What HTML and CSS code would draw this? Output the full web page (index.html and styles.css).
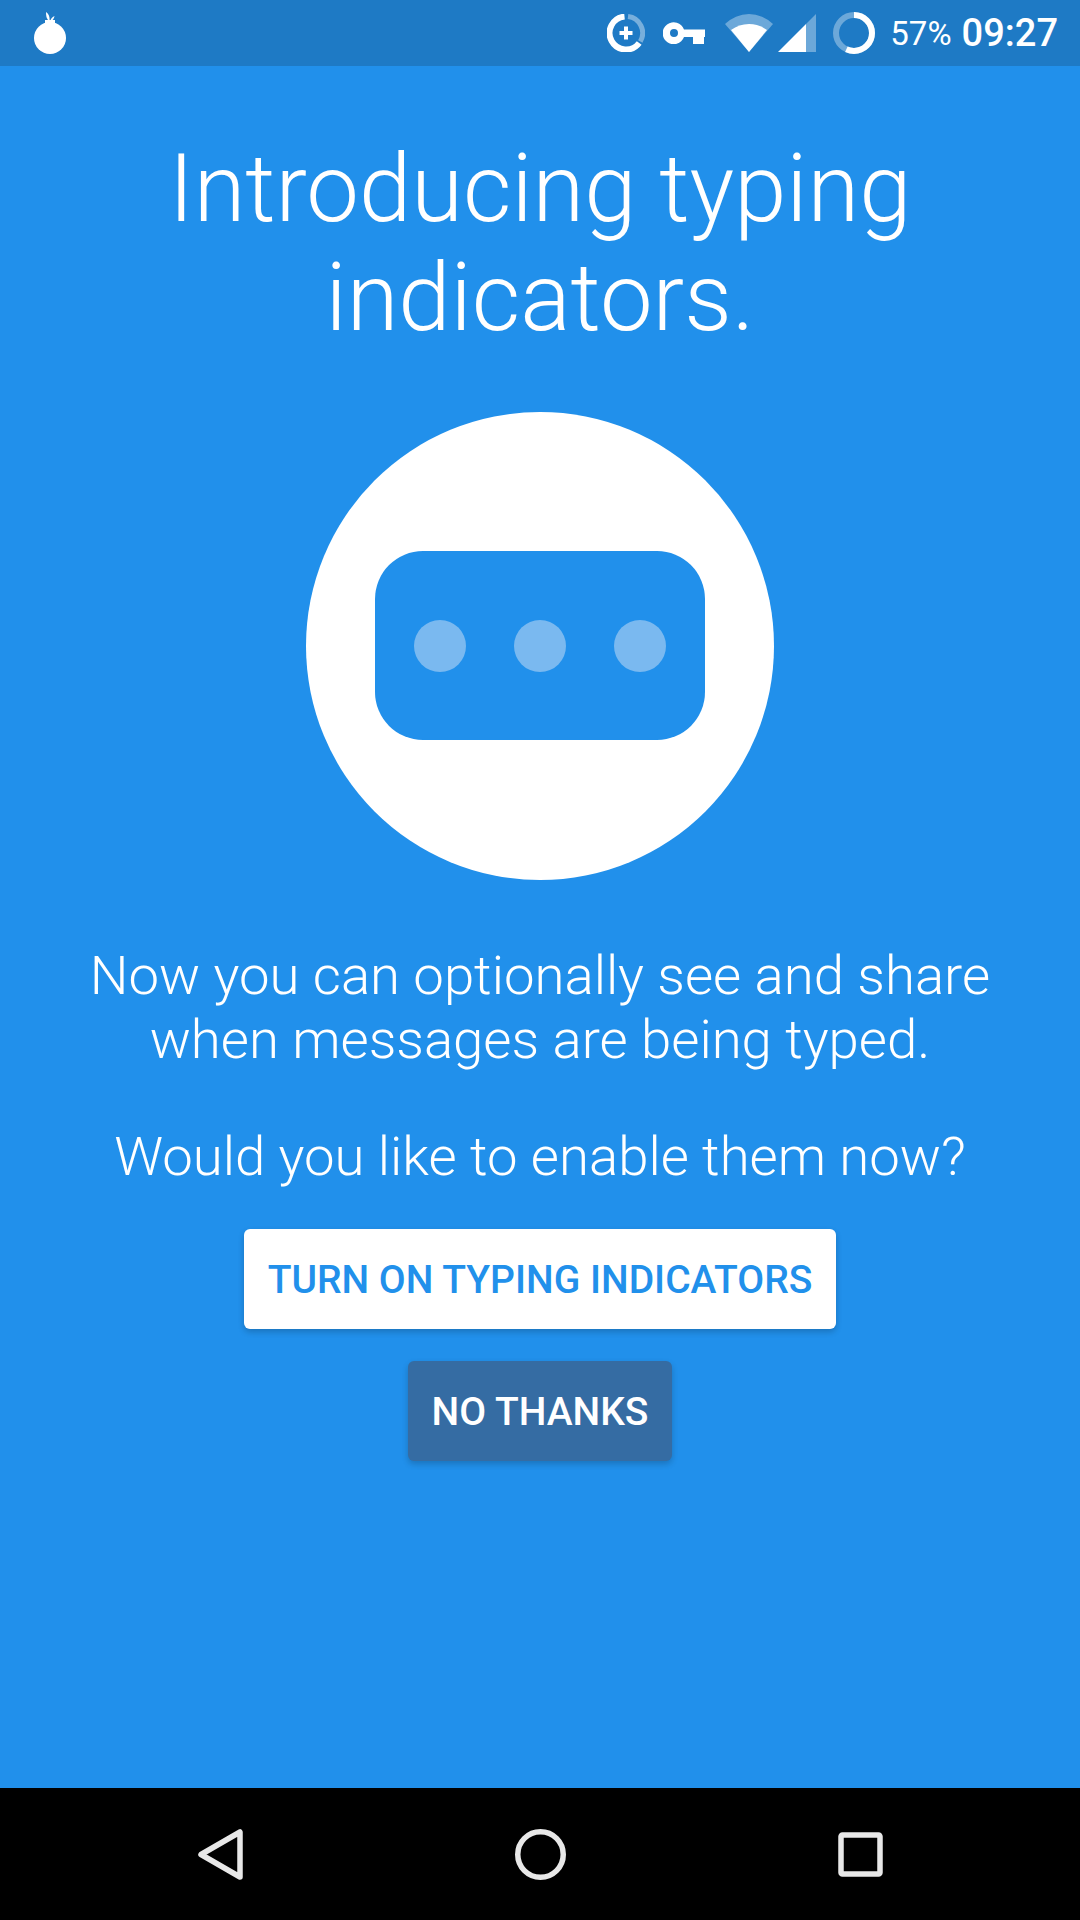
FILE: index.html
```html
<!DOCTYPE html>
<html lang="en">
<head>
    <meta charset="UTF-8">
    <meta name="viewport" content="width=device-width, initial-scale=1.0">
    <title>Typing indicators</title>
    <link rel="stylesheet" href="styles.css">
</head>
<body>
    <div class="screen">
        <div class="status-bar">
            <svg width="34" height="44" viewBox="0 0 34 44">
                <circle cx="17" cy="27" r="16" fill="#fff"/>
                <rect x="12" y="9" width="10" height="6" fill="#fff"/>
                <path d="M16 10 C13.5 8 13 5 13 1 C15.5 2.5 17 6 16.5 10Z" fill="#fff"/>
                <path d="M17.5 10 C17.5 8 19 6 21.5 5 C21 7.5 20 9.5 17.5 10.5Z" fill="#fff"/>
            </svg>
            <div class="status-icons">
                <svg class="saver-icon" width="38" height="38" viewBox="0 0 38 38">
                    <path d="M21 2.6 A16.5 16.5 0 0 1 33.3 27.4" fill="none" stroke="#fff" stroke-opacity="0.4" stroke-width="5"/>
                    <path d="M32.2 29 A16.5 16.5 0 1 1 17.5 2.6" fill="none" stroke="#fff" stroke-width="6"/>
                    <path d="M19 12.5 V25.5 M12.5 19 H25.5" stroke="#fff" stroke-width="4"/>
                </svg>
                <svg class="key-icon" width="42" height="22" viewBox="0 0 42 22">
                    <path fill="#fff" fill-rule="evenodd" d="M21 7.5 H42 V15 H41 V22 H30 V15 H21 A11 11 0 1 1 21 7.5Z M11 7 A4 4 0 1 0 11 15 A4 4 0 1 0 11 7Z"/>
                </svg>
                <svg class="wifi-icon" width="48" height="38" viewBox="0 0 48 38">
                    <path fill="#fff" fill-opacity="0.35" d="M0 10 A34 34 0 0 1 48 10 L24 38Z"/>
                    <path fill="#fff" d="M6 16 A30 30 0 0 1 42 16 L24 38Z"/>
                </svg>
                <svg class="signal-icon" width="38" height="38" viewBox="0 0 38 38">
                    <path fill="#fff" fill-opacity="0.35" d="M28 10 L38 0 V38 H28Z"/>
                    <path fill="#fff" d="M0 38 L28 10 V38Z"/>
                </svg>
                <svg class="battery-icon" width="42" height="42" viewBox="0 0 42 42">
                    <circle cx="21" cy="21" r="18" fill="none" stroke="#fff" stroke-opacity="0.35" stroke-width="6"/>
                    <circle cx="21" cy="21" r="18" fill="none" stroke="#fff" stroke-width="6" pathLength="100" stroke-dasharray="57 43" transform="rotate(-90 21 21)"/>
                </svg>
                <span class="battery-text">57%</span>
                <span class="clock">09:27</span>
            </div>
        </div>

        <div class="content">
            <h1>Introducing typing indicators.</h1>
            <div class="badge">
                <div class="bubble">
                    <span class="dot"></span>
                    <span class="dot"></span>
                    <span class="dot"></span>
                </div>
            </div>
            <p class="lead">Now you can optionally see and share when messages are being typed.</p>
            <p class="question">Would you like to enable them now?</p>
            <button class="btn btn-primary">TURN ON TYPING INDICATORS</button>
            <button class="btn btn-secondary">NO THANKS</button>
        </div>

        <div class="nav-bar">
            <svg width="45" height="51" viewBox="0 0 45 51">
                <path d="M42 3 V48 L3 25.5Z" fill="none" stroke="#e8e8e8" stroke-width="5.5" stroke-linejoin="round"/>
            </svg>
            <svg width="51" height="51" viewBox="0 0 51 51">
                <circle cx="25.5" cy="25.5" r="22.75" fill="none" stroke="#e8e8e8" stroke-width="5.5"/>
            </svg>
            <svg width="45" height="45" viewBox="0 0 45 45">
                <rect x="3" y="3" width="39" height="39" rx="1.5" fill="none" stroke="#e8e8e8" stroke-width="5.5"/>
            </svg>
        </div>
    </div>
</body>
</html>
```

FILE: styles.css
```css
body {
    margin: 0;
    font-family: Roboto, sans-serif;
    background-color: #2190eb;
}

.screen {
    width: 1080px;
    height: 1920px;
    display: flex;
    flex-direction: column;
    overflow: hidden;
}

.status-bar {
    height: 66px;
    flex: none;
    display: flex;
    align-items: center;
    justify-content: space-between;
    padding: 0 22px 0 33px;
    background-color: #1e7ac5;
    color: white;
}

.status-icons {
    display: flex;
    align-items: center;
}

.key-icon {
    margin-left: 18px;
}

.wifi-icon {
    margin-left: 20px;
}

.signal-icon {
    margin-left: 5px;
}

.battery-icon {
    margin-left: 17px;
}

.battery-text {
    margin-left: 15px;
    font-size: 33px;
    font-weight: 400;
}

.clock {
    margin-left: 10px;
    font-size: 38px;
    font-weight: 500;
}

.content {
    flex: 1;
    display: flex;
    flex-direction: column;
    align-items: center;
    color: white;
    text-align: center;
}

h1 {
    width: 800px;
    margin: 69px 0 0;
    font-size: 94px;
    line-height: 109px;
    font-weight: 300;
}

.badge {
    width: 468px;
    height: 468px;
    margin-top: 59px;
    border-radius: 50%;
    background-color: white;
    display: flex;
    justify-content: center;
    box-sizing: border-box;
    padding-top: 139px;
}

.bubble {
    width: 330px;
    height: 189px;
    border-radius: 48px;
    background-color: #2190eb;
    display: flex;
    justify-content: center;
    align-items: center;
    gap: 48px;
}

.dot {
    width: 52px;
    height: 52px;
    border-radius: 50%;
    background-color: #7ab9f0;
}

.lead {
    width: 940px;
    margin: 63px 0 0;
    font-size: 54.5px;
    line-height: 64px;
    font-weight: 300;
}

.question {
    margin: 53px 0 0;
    font-size: 54.5px;
    line-height: 64px;
    font-weight: 300;
}

.btn {
    height: 100px;
    padding: 2px 24px 0;
    border: none;
    border-radius: 6px;
    font-family: Roboto, sans-serif;
    font-size: 39px;
    font-weight: 500;
    box-shadow: 0 3px 6px rgba(0, 0, 0, 0.2);
}

.btn-primary {
    margin-top: 41px;
    background-color: white;
    color: #2190eb;
}

.btn-secondary {
    margin-top: 32px;
    background-color: #356ca3;
    color: white;
}

.nav-bar {
    height: 132px;
    flex: none;
    background-color: black;
    display: flex;
    align-items: center;
    justify-content: space-between;
    padding: 0 197px 0 198px;
}
```
